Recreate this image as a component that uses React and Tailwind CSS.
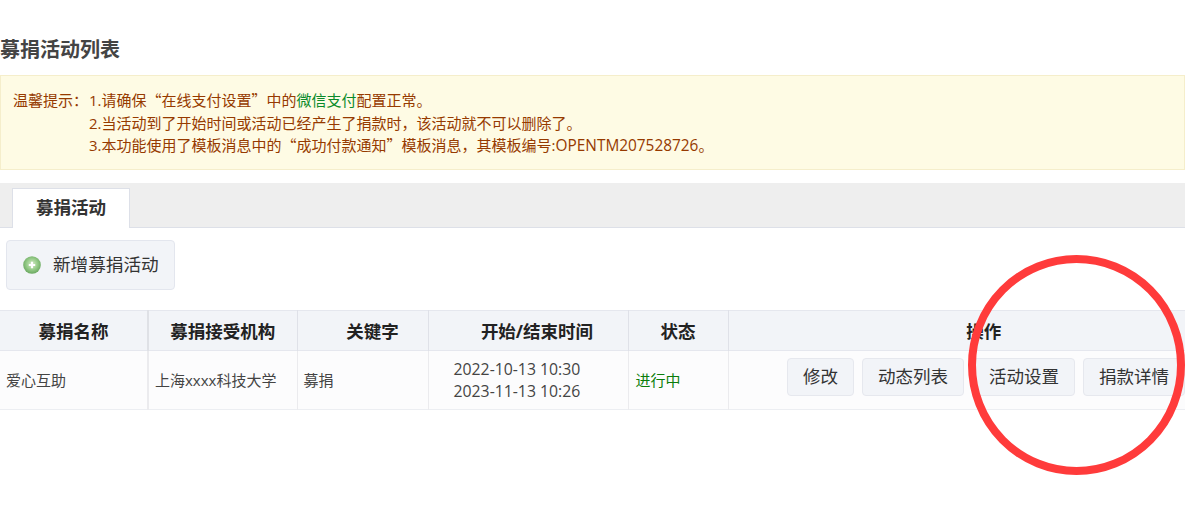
const actions = ["修改", "动态列表", "活动设置", "捐款详情"];
const heads = ["募捐名称", "募捐接受机构", "关键字", "开始/结束时间", "状态"];

function Quote({ children }) {
  return <span className="font-['Noto_Sans_CJK_SC',sans-serif]">{children}</span>;
}

function PlusIcon() {
  return (
    <svg className="h-[18px] w-[18px] shrink-0" viewBox="0 0 18 18">
      <defs>
        <radialGradient id="plusGreen" cx="50%" cy="45%" r="55%">
          <stop offset="0%" stopColor="#d5ecc8" />
          <stop offset="60%" stopColor="#93c986" />
          <stop offset="100%" stopColor="#6aa860" />
        </radialGradient>
      </defs>
      <circle cx="9" cy="9" r="8.8" fill="url(#plusGreen)" />
      <path d="M9 5.8v6.4M5.8 9h6.4" stroke="#fff" strokeWidth="2.2" />
    </svg>
  );
}

export default function App() {
  return (
    <div className="relative h-[532px] w-[1185px] overflow-hidden bg-white font-['Open_Sans','Noto_Sans_CJK_SC',sans-serif] text-[#333]">
      <h1 className="h-[75px] pt-[36px] text-[20px] leading-[28px] font-bold text-[#444]">募捐活动列表</h1>

      {/* 温馨提示 */}
      <div className="flex h-[95px] border border-[#f5eecb] bg-[#fefbe4] pt-[13px] pl-[12px] text-[15px] leading-[22.6px] text-[#963a00]">
        <div className="w-[76px] shrink-0">温馨提示：</div>
        <div>
          <p>
            1.请确保<Quote>“</Quote>在线支付设置<Quote>”</Quote>中的<span className="text-[#0a8a2a]">微信支付</span>配置正常。
          </p>
          <p>2.当活动到了开始时间或活动已经产生了捐款时，该活动就不可以删除了。</p>
          <p>
            3.本功能使用了模板消息中的<Quote>“</Quote>成功付款通知<Quote>”</Quote>模板消息，其模板编号:<span className="text-[15.4px]">OPENTM207528726</span>。
          </p>
        </div>
      </div>

      {/* tab */}
      <div className="mt-[13px] flex h-[45px] items-end border-b border-[#dde0e8] bg-[#eeeeee] pl-[12px]">
        <div className="-mb-px flex h-[40px] w-[118px] items-center justify-center border border-b-0 border-[#dde0e8] bg-white pb-[2px] text-[17.5px] font-bold text-[#333]">
          募捐活动
        </div>
      </div>

      <div className="mt-[12px] ml-[6px] flex h-[50px] w-[169px] items-center rounded border border-[#e3e6ee] bg-[#f2f4f8] pl-[16px]">
        <PlusIcon />
        <span className="ml-[12px] pb-[2px] text-[17.6px] text-[#333]">新增募捐活动</span>
      </div>

      <table className="mt-[20px] w-full table-fixed border-collapse">
        <colgroup>
          <col className="w-[148px]" />
          <col className="w-[149px]" />
          <col className="w-[131px]" />
          <col className="w-[200px]" />
          <col className="w-[100px]" />
          <col />
        </colgroup>
        <thead>
          <tr className="h-[40px] border-y border-[#e5e7ee] bg-[#f2f4f8] text-[17.5px] font-bold text-[#222]">
            <th className="border-r-2 border-[#dfe1e6] pt-[1px] font-bold">{heads[0]}</th>
            <th className="border-r border-[#dfe1e8] pt-[1px] font-bold">{heads[1]}</th>
            <th className="border-r border-[#dfe1e8] pt-[1px] pl-[20px] font-bold">{heads[2]}</th>
            <th className="border-r border-[#dfe1e8] pt-[1px] pl-[18px] font-bold">{heads[3]}</th>
            <th className="border-r border-[#dfe1e8] pt-[1px] font-bold">{heads[4]}</th>
            <th className="pt-[1px] pl-[54px] font-bold">操作</th>
          </tr>
        </thead>
        <tbody>
          <tr className="h-[59px] border-b border-[#eceef2] bg-[#fcfcfd] text-[15px] text-[#444]">
            <td className="border-r-2 border-[#ebebee] pl-[6px]">爱心互助</td>
            <td className="border-r border-[#ebebee] pl-[6px]">上海xxxx科技大学</td>
            <td className="border-r border-[#ebebee] pl-[6px]">募捐</td>
            <td className="border-r border-[#ebebee] pl-[25px] text-[15.8px] leading-[22px]">
              2022-10-13 10:30
              <br />
              2023-11-13 10:26
            </td>
            <td className="border-r border-[#ebebee] pl-[7px] text-[#0a7d0a]">进行中</td>
            <td>
              <div className="flex items-center justify-end gap-[8px] pb-[6px]">
                {actions.map((a) => (
                  <button
                    key={a}
                    className={
                      a === "动态列表"
                        ? "mr-[1px] h-[38px] rounded border border-[#e6e8ee] bg-[#f2f4f8] px-[15px] pb-[2px] text-[17.5px] whitespace-nowrap text-[#333]"
                        : "h-[38px] rounded border border-[#e6e8ee] bg-[#f2f4f8] px-[15px] pb-[2px] text-[17.5px] whitespace-nowrap text-[#333]"
                    }
                  >
                    {a}
                  </button>
                ))}
              </div>
            </td>
          </tr>
        </tbody>
      </table>

      {/* 红色圈注 */}
      <svg className="absolute top-[255px] left-[968px] h-[220px] w-[217px] overflow-visible" viewBox="0 0 217 220">
        <ellipse cx="108.5" cy="110" rx="104.5" ry="106" fill="none" stroke="#ff3b3b" strokeWidth="8" />
      </svg>
    </div>
  );
}
